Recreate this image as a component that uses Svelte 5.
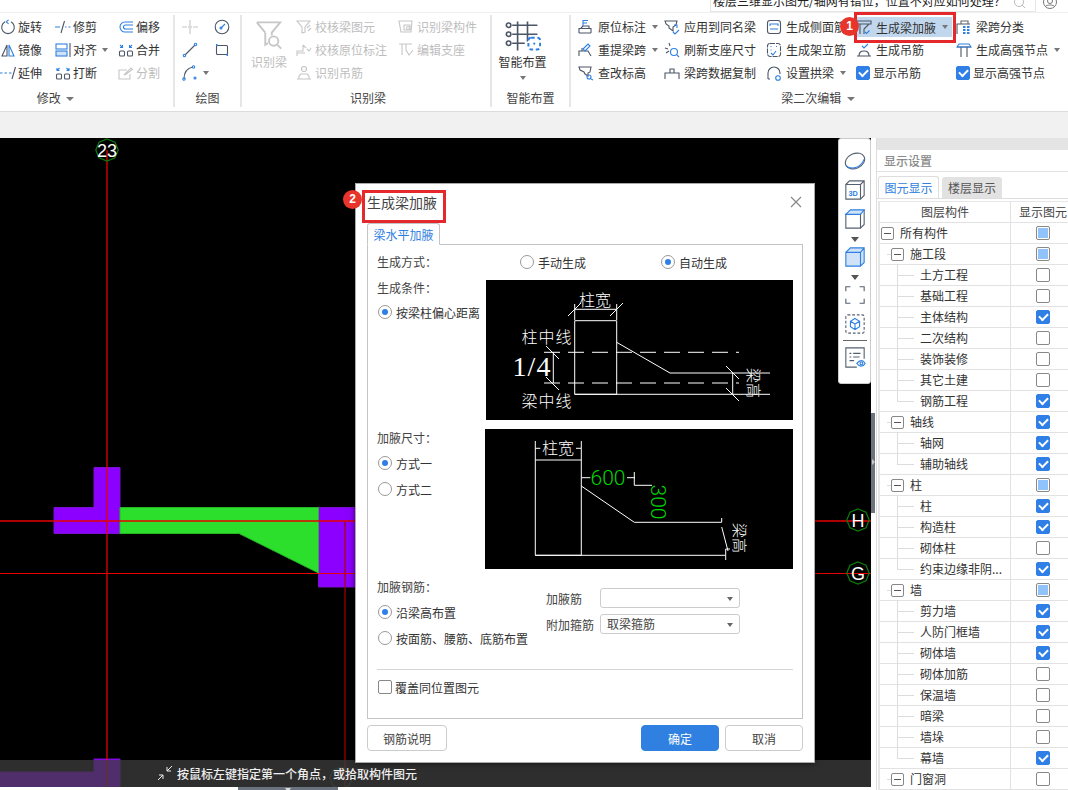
<script>
  const B = '#2f80e0';
  const icons = {
    rotate: `<path d="M5 2.800a6.300 6.300 0 1 0 6 0"/><path stroke="${B}" d="M8.600 .8 6.200 2.800 8.600 4.800"/>`,
    trim: `<path d="M9.500 2 6 14"/><path stroke="${B}" d="M0 8h5M10 8h1.500M13.500 8h2"/>`,
    offset: `<path stroke="${B}" d="M15 3H7a5 5 0 0 0 0 10h8M15 6H7.500a2 2 0 0 0 0 4H15"/>`,
    mirror: `<path d="M7 3 2 14h5z"/><path stroke="${B}" d="M9 3l5 11H9z"/>`,
    align: `<path d="M15 1v14"/><rect stroke="${B}" x="1" y="2" width="11" height="5"/><rect stroke="${B}" fill="#cfe2f8" x="1" y="9" width="11" height="5"/>`,
    merge: `<rect x="1.500" y="9" width="5" height="5" rx="1"/><rect x="9.500" y="9" width="5" height="5" rx="1"/><path stroke="${B}" d="M2 3l2.500 2.500M4.500 3v2.500H2M14 3l-2.500 2.500M11.500 3v2.500H14"/>`,
    extend: `<path stroke="${B}" d="M0 8h2.500M4.500 8h2.500M9 8h2.500"/><path d="M15.500 2 12 14"/>`,
    break: `<rect x="1.500" y="9" width="5" height="5" rx="1"/><rect x="9.500" y="9" width="5" height="5" rx="1"/><path stroke="${B}" d="M4.500 3 2 5.500M2 3v2.500h2.500M11.500 3 14 5.500M14 3v2.500h-2.500"/>`,
    split: `<path d="M12 9v5H1V5h8"/><path d="M6 10l7-7 1.500 1.500-7 5z"/>`,
    point: `<path d="M0 8h5M11 8h5M8 1v5M8 10v5"/><circle cx="8" cy="8" r="1.200"/>`,
    gauge: `<circle cx="8" cy="8" r="6.800"/><path stroke="${B}" d="M7 9l4-4"/><circle stroke="${B}" cx="7" cy="9" r="1"/>`,
    line: `<path d="M3 13 13 3"/><circle stroke="${B}" cx="2.500" cy="13.500" r="1.200"/><circle stroke="${B}" cx="13.500" cy="2.500" r="1.200"/>`,
    rect: `<rect x="2.500" y="3.500" width="11" height="9" rx="1"/><path stroke="${B}" stroke-width="2" d="M2 3h1.500M12.500 13H14"/>`,
    arc: `<path d="M2 14C2 7 6 3 11 2"/><circle stroke="${B}" cx="2" cy="14" r="1.200"/><circle stroke="${B}" cx="11.500" cy="2" r="1.200"/><circle stroke="${B}" cx="13" cy="13" r="1"/>`,
    chkbeam: `<path d="M1 2h13L9 8v5l-3 1V8zM11 9l3-3M12 12l3-3"/>`,
    chkorig: `<path d="M1 14V9h6V3M1 11h8M11 7l2 2 2-3M7 3l3 3"/>`,
    hang: `<circle cx="8" cy="4" r="2.500"/><path d="M3 14v-3l2-2h6l2 2v3M1 14h14"/>`,
    reccomp: `<path d="M1 2h13l-1 11H3zM6 6h6v5H6z"/><circle cx="10" cy="9" r="1.500"/>`,
    support: `<path d="M1 2h13M4 2v11M8 2v6l3 5 4-5"/>`,
    origin: `<path d="M1 14V9.500h12V14M1 14h12M3 9l2-2h6v2"/><path stroke="${B}" d="M5 7V1.500h5M5 4h4"/>`,
    apply: `<path d="M1 2h12l-1 4-3 2v4L5 9V7L2 5z"/><path stroke="${B}" d="M9 13l2 2 4-4M10 6h3v3"/>`,
    side: `<rect x="1.500" y="1.500" width="13" height="13" rx="2.500"/><path stroke="${B}" d="M4 7V5h8v2M4 10h8"/>`,
    span: `<path d="M1 15V5h13M1 5h13"/><path d="M5 5V2h7v3" stroke="#666"/><path stroke="${B}" stroke-width="1.800" d="M7 8h2.500M11 8h2.500M7 11h2.500M11 11h2.500M7 14h2.500M11 14h2.500"/>`,
    lift: `<path d="M1 14V9h9l3 5M4 9V6"/><path stroke="${B}" d="M5 7l5-5 2 2-5 5z"/>`,
    refresh: `<path d="M5 1l1 3M1 6l3 1M2 11l3-2"/><circle stroke="${B}" cx="10" cy="10" r="3.500"/><path stroke="${B}" d="M13 13l2 2"/>`,
    stand: `<rect x="1.500" y="1.500" width="13" height="13" rx="2.500" stroke-dasharray="5 1"/><path stroke="${B}" d="M4.500 4.500h1M10 4.500h1M4.500 8h1M5 11l2 2 3-4"/>`,
    hanggen: `<path d="M1 14h14M3 14c0-4 2-5 5-5s5 1 5 5"/><path stroke="${B}" d="M6 4l2 2 4-4"/>`,
    hsnode: `<path d="M1 5h14M5 5v10M11 5v10"/><path stroke="${B}" d="M3 2h10l2 3H1z"/>`,
    elev: `<path d="M1 2h12l-1 5-2 1v3L7 9 6 7 2 5z"/><circle stroke="${B}" cx="11" cy="12" r="2"/><path stroke="${B}" d="M13 14l2 1"/>`,
    spandata: `<path d="M1 14V8h14v6M1 8h14M6 8V4h4v4"/>`,
    arch: `<path d="M2 14V8a6 6 0 0 1 12 0v1M2 14h2"/><circle stroke="${B}" cx="12" cy="13" r="2.300"/>`,
    addon: `<path d="M1 2h14v3H1zM4 5v10M13 5 8 10v5"/><path stroke="${B}" d="M9 13l1.500 1.500 3-3"/>`
  };

  const modify = [
    { i: 'rotate', t: '旋转' }, { i: 'trim', t: '修剪' }, { i: 'offset', t: '偏移' },
    { i: 'mirror', t: '镜像' }, { i: 'align', t: '对齐', c: 1 }, { i: 'merge', t: '合并' },
    { i: 'extend', t: '延伸' }, { i: 'break', t: '打断' }, { i: 'split', t: '分割', d: 1 }
  ];
  const draw = ['point', 'gauge', 'line', 'rect', 'arc'];
  const recog = [
    { i: 'chkbeam', t: '校核梁图元', d: 1 }, { i: 'reccomp', t: '识别梁构件', d: 1 },
    { i: 'chkorig', t: '校核原位标注', d: 1 }, { i: 'support', t: '编辑支座', d: 1 },
    { i: 'hang', t: '识别吊筋', d: 1 }
  ];
  const edit = [
    { i: 'origin', t: '原位标注', c: 1 }, { i: 'apply', t: '应用到同名梁' }, { i: 'side', t: '生成侧面筋' },
    { i: 'addon', t: '生成梁加腋', c: 1, hl: 1 }, { i: 'span', t: '梁跨分类' },
    { i: 'lift', t: '重提梁跨', c: 1 }, { i: 'refresh', t: '刷新支座尺寸' }, { i: 'stand', t: '生成架立筋' },
    { i: 'hanggen', t: '生成吊筋' }, { i: 'hsnode', t: '生成高强节点', c: 1 },
    { i: 'elev', t: '查改标高' }, { i: 'spandata', t: '梁跨数据复制' }, { i: 'arch', t: '设置拱梁', c: 1 },
    { k: 1, t: '显示吊筋' }, { k: 1, t: '显示高强节点' }
  ];

  // level, name, state
  const rows = [
    [0, '所有构件', 'half'], [1, '施工段', 'half'], [2, '土方工程', 'off'], [2, '基础工程', 'off'],
    [2, '主体结构', 'on'], [2, '二次结构', 'off'], [2, '装饰装修', 'off'], [2, '其它土建', 'off'],
    [2, '钢筋工程', 'on'], [1, '轴线', 'on'], [2, '轴网', 'on'], [2, '辅助轴线', 'on'],
    [1, '柱', 'half'], [2, '柱', 'on'], [2, '构造柱', 'on'], [2, '砌体柱', 'off'],
    [2, '约束边缘非阴...', 'on'], [1, '墙', 'half'], [2, '剪力墙', 'on'], [2, '人防门框墙', 'on'],
    [2, '砌体墙', 'on'], [2, '砌体加筋', 'off'], [2, '保温墙', 'off'], [2, '暗梁', 'off'],
    [2, '墙垛', 'off'], [2, '幕墙', 'on'], [1, '门窗洞', 'off']
  ];
  const isLast = (idx) => rows[idx][0] === 2 && (!rows[idx + 1] || rows[idx + 1][0] < 2);
</script>

{#snippet tool(it)}
  <div class="item" class:off={it.d} class:hl={it.hl} class:chk={it.k}>
    {#if it.k}
      <span class="check on"></span>
    {:else}
      <svg class="ic" viewBox="0 0 16 16">{@html icons[it.i]}</svg>
    {/if}
    <span>{it.t}</span>
    {#if it.c}<i class="caret"></i>{/if}
  </div>
{/snippet}

<div class="page">
  <header class="ribbon">
    <div class="topbar">
      <div class="search">
        <span class="q">楼层三维显示图元/轴网有错位，位置不对应如何处理？</span>
        <svg class="q-ic" viewBox="0 0 12 12"><circle cx="5" cy="2" r="4.500" /><path d="M8 5l3 3" /></svg>
      </div>
      <svg class="user" viewBox="0 0 14 14"><circle cx="7" cy="2" r="6.500" /><circle cx="7" cy="1" r="2.500" /><path d="M2.500 6.500c1-2 8-2 9 0" /></svg>
    </div>

    <div class="groups">
      <section class="group g-mod">
        <div class="tools">
          {#each modify as it}{@render tool(it)}{/each}
        </div>
        <div class="glabel">修改 <i class="caret big"></i></div>
      </section>

      <section class="group g-draw">
        <div class="tools">
          {#each draw as name, n}
            <div class="item">
              <svg class="ic" class:off={n === 0} viewBox="0 0 16 16">{@html icons[name]}</svg>
              {#if n === 4}<i class="caret"></i>{/if}
            </div>
          {/each}
        </div>
        <div class="glabel">绘图</div>
      </section>

      <section class="group g-rec">
        <div class="rec-body">
          <div class="bigbtn off">
            <svg class="big-funnel" viewBox="0 0 30 32">
              <path d="M2 2h25L18 13v3M11 13 2 2M11 13v13l3-2" />
              <circle cx="20" cy="22" r="5" /><path d="M24 26l4 4" />
            </svg>
            <span>识别梁</span>
          </div>
          <div class="tools">
            {#each recog as it}{@render tool(it)}{/each}
          </div>
        </div>
        <div class="glabel">识别梁</div>
      </section>

      <section class="group g-smart">
        <div class="bigbtn">
          <svg class="big-grid" viewBox="0 0 40 32">
            <path d="M8 4h28M8 14h28M8 24h14M14 0v32M25 0v22" />
            <circle cx="4" cy="4" r="2.500" /><circle cx="4" cy="14" r="2.500" /><circle cx="4" cy="24" r="2.500" />
            <rect x="26" y="18" width="13" height="13" rx="3" stroke="#2f80e0" stroke-width="2.200" stroke-dasharray="4 3" fill="#fff" />
            <circle cx="32.500" cy="24.500" r="1.200" fill="#2f80e0" stroke="none" />
          </svg>
          <span>智能布置</span>
          <i class="caret"></i>
        </div>
        <div class="glabel">智能布置</div>
      </section>

      <section class="group g-edit">
        <div class="tools">
          {#each edit as it}{@render tool(it)}{/each}
        </div>
        <div class="glabel">梁二次编辑 <i class="caret big"></i></div>
      </section>
    </div>

    <div class="redbox one"></div>
    <b class="badge b1">1</b>
  </header>

  <div class="band"></div>

  <main class="work">
    <div class="left">
      <div class="canvas">
        <svg class="cad-view" viewBox="0 138 871 649">
          <path fill="#8b00ff" stroke="#7a10d0" d="M94 467.500h26V533.500H54V507.500h40zM318.500 507.500H360V587H318.500zM94 759h26v30H0V772h94z" />
          <path fill="#2ddf2d" stroke="#25b525" d="M120 507.500H318.500V573L239 533.500H120z" />
          <path stroke="#e60000" stroke-width="1.300" fill="none" d="M107 150V790M0 521H871" />
          <path stroke="#e60000" stroke-width="1" fill="none" d="M0 573.500H871" />
          <path stroke="#a80000" stroke-width="1.200" fill="none" d="M345 521V790" />
          <g class="marker">
            <path d="M107 139l8 3.200 3.200 7.800-3.200 7.800-8 3.200-8-3.200-3.200-7.800 3.200-7.800z" />
            <path d="M858 509l8 3.200 3.200 7.800-3.200 7.800-8 3.200-8-3.200-3.200-7.800 3.200-7.800z" />
            <path d="M858 562l8 3.200 3.200 7.800-3.200 7.800-8 3.200-8-3.200-3.200-7.800 3.200-7.800z" />
            <path class="dim" d="M341 767l8 3.200 3.200 7.800-3.200 7.800-8 3.200-8-3.200-3.200-7.800 3.200-7.800z" />
          </g>
          <text class="mk" x="107" y="156.500">23</text>
          <text class="mk" x="858" y="527">H</text>
          <text class="mk" x="858" y="580">G</text>
        </svg>

        <div class="status">
          <svg class="st-ic" viewBox="0 0 16 16"><path d="M1 15l5-5M2 10h4v4M15 1l-5 5M14 6h-4V2" /></svg>
          <span>按鼠标左键指定第一个角点，或拾取构件图元</span>
        </div>

        <nav class="viewbar">
          <svg viewBox="0 0 24 24" class="vb"><ellipse transform="rotate(-25 12 12)" cx="12" cy="12" rx="11" ry="8" /><path stroke="#2f80e0" d="M2 17c6 5 16 3 20-7" /></svg>
          <svg viewBox="0 0 24 24" class="vb"><path d="M2 6h16v16H2zM2 6l4-4h16v16l-4 4M18 6l4-4" /><text x="10" y="18" class="t3d">3D</text></svg>
          <svg viewBox="0 0 24 24" class="vb"><path d="M2 7v15h16V7zM18 22l4-4V2" /><path stroke="#2f80e0" fill="#cfe2f8" d="M2 7l5-5h15l-4 5z" /></svg>
          <i class="caret vc"></i>
          <svg viewBox="0 0 24 24" class="vb"><path fill="#cfe2f8" stroke="#2f80e0" d="M2 7h16v15H2zM2 7l5-5h15v16l-4 4M18 7l4-5" /></svg>
          <i class="caret vc"></i>
          <svg viewBox="0 0 24 24" class="vb"><path d="M2 8V3h5M17 3h5v5M22 16v5h-5M7 21H2v-5" /></svg>
          <svg viewBox="0 0 24 24" class="vb"><rect x="2" y="2" width="20" height="20" rx="2" stroke-dasharray="3 2" /><path stroke="#2f80e0" d="M12 6l5 3v6l-5 3-5-3V9zM7 9l5 3 5-3M12 12v6" /></svg>
          <div class="vsep"></div>
          <svg viewBox="0 0 24 24" class="vb"><path d="M22 14V2H2v21h12" /><path d="M6 8h2M10 8h8M6 12h2M10 12h7M6 16h5" /><circle stroke="#2f80e0" cx="19" cy="19" r="1.500" /><path stroke="#2f80e0" d="M14 19c3-4 7-4 9 0-2 4-6 4-9 0z" /></svg>
        </nav>
      </div>
      <div class="hscroll"><span class="htab"><i class="caret white"></i></span></div>
    </div>

    <div class="split"><span class="grip"><i></i></span></div>

    <aside class="panel">
      <div class="p-strip"></div>
      <div class="p-title">显示设置</div>
      <div class="p-tabs">
        <span class="p-tab active">图元显示</span>
        <span class="p-tab">楼层显示</span>
      </div>
      <div class="tree">
        <div class="row head">
          <span class="c1 center">图层构件</span>
          <span class="c2">显示图元</span>
        </div>
        {#each rows as [lv, name, st], idx}
          <div class="row">
            <span class="c1 lv{lv}">
              {#if lv === 2}
                <i class="vline" class:last={isLast(idx)}></i><i class="hline"></i>
              {:else}
                {#if lv === 1}<i class="hstub"></i>{/if}
                <i class="fold"></i>
              {/if}
              <span class="nm">{name}</span>
            </span>
            <span class="c2"><span class="check {st}"></span></span>
          </div>
        {/each}
      </div>
    </aside>

    <div class="dialog">
      <div class="d-title">
        <span>生成梁加腋</span>
        <svg class="close" viewBox="0 0 12 12"><path d="M1 1l10 10M11 1 1 11" /></svg>
      </div>
      <div class="d-tab">梁水平加腋</div>
      <div class="d-body">
        <div class="line-mode">
          <span class="lab">生成方式：</span>
          <label class="radio r-a"><i class="dot"></i>手动生成</label>
          <label class="radio r-b"><i class="dot sel"></i>自动生成</label>
        </div>

        <div class="sec s-1">
          <div class="side">
            <span class="lab">生成条件：</span>
            <label class="radio"><i class="dot sel"></i>按梁柱偏心距离</label>
          </div>
          <svg class="pic" viewBox="0 0 307 140">
            <g class="w">
              <path d="M88.700 40.700H130.700V114.300H88.700zM88.700 29.300H130.700M88.700 24V40M130.700 24V40M82 36l13-13M124 36l13-13" />
              <path d="M130.700 62.300 184 93H284M88.700 114.300H284M246.700 93V114.300M240 86l13 13M240 108l13 13M67.300 72.300V103M60 66l13 13M60 97l13 13" />
              <path stroke-dasharray="16 8" d="M58 72.300H253M58 103H253" />
            </g>
            <text class="cjk" x="109" y="26">柱宽</text>
            <text class="cjk sp" x="61" y="63">柱中线</text>
            <text class="cjk sp" x="61" y="127">梁中线</text>
            <text class="frac" x="46" y="96">1/4</text>
            <text class="cjk small" transform="translate(267 103) rotate(90)" x="0" y="5">梁高</text>
          </svg>
        </div>

        <div class="sec s-2">
          <div class="side">
            <span class="lab">加腋尺寸：</span>
            <label class="radio"><i class="dot sel"></i>方式一</label>
            <label class="radio"><i class="dot"></i>方式二</label>
          </div>
          <svg class="pic" viewBox="0 0 308 140">
            <g class="w">
              <path d="M50.300 31H96.300V126.300H50.300zM50.300 12V31M96.300 12V31M50.300 19.300h5M91 19.300h5M96.300 48.700h9M142 48.700h8M149.300 43V56.300H167" />
              <path d="M96.300 57 149.300 93.300H236.700V89M236.700 98 243 122M240.700 126.300V120H245M50.300 126.300H240.700V131" />
            </g>
            <text class="cjk" x="73" y="25">柱宽</text>
            <text class="gr" x="123" y="56">600</text>
            <text class="gr" transform="translate(173 73) rotate(90)" x="0" y="7">300</text>
            <text class="cjk small" transform="translate(254 109) rotate(90)" x="0" y="5">梁高</text>
          </svg>
        </div>

        <div class="sec s-3">
          <div class="side">
            <span class="lab">加腋钢筋：</span>
            <label class="radio"><i class="dot sel"></i>沿梁高布置</label>
            <label class="radio"><i class="dot"></i>按面筋、腰筋、底筋布置</label>
          </div>
          <div class="fields">
            <span class="f-lab">加腋筋</span>
            <div class="select"><i class="caret"></i></div>
            <span class="f-lab">附加箍筋</span>
            <div class="select">取梁箍筋<i class="caret"></i></div>
          </div>
        </div>

        <div class="rule"></div>
        <label class="cover"><span class="check off"></span>覆盖同位置图元</label>
      </div>
      <div class="d-foot">
        <button class="btn wide">钢筋说明</button>
        <span class="grow"></span>
        <button class="btn primary">确定</button>
        <button class="btn">取消</button>
      </div>
      <div class="redbox two"></div>
      <b class="badge b2">2</b>
    </div>
  </main>
</div>

<style>
  :global(body) { margin: 0; background: #fff; }

  .page {
    width: 1068px;
    height: 790px;
    overflow: hidden;
    position: relative;
    font-family: "Noto Sans CJK SC", "Liberation Sans", sans-serif;
    font-size: 12px;
    color: #333;
    background: #fff;
  }

  /* ribbon */
  .ribbon { position: relative; height: 111px; border-bottom: 1px solid #dcdcdc; background: #fff; box-sizing: content-box; }
  .topbar { height: 12px; border-bottom: 1px solid #f0f0f0; position: relative; overflow: hidden; }
  .search {
    position: absolute; left: 710px; top: -1px; width: 324px; height: 11px;
    border: 1px solid #e6e6e6; overflow: hidden; background: #fff;
  }
  .q { position: absolute; left: 2px; top: -7px; line-height: 16px; white-space: nowrap; color: #222; }
  .q-ic { position: absolute; left: 303px; top: 0; width: 12px; height: 12px; fill: none; stroke: #bbb; }
  .user { position: absolute; left: 1043px; top: 0; width: 14px; height: 14px; fill: none; stroke: #777; }

  .groups { display: flex; height: 92px; margin-top: 2px; }
  .group { position: relative; height: 92px; display: flex; flex-direction: column; border-right: 2px solid #e6e6e6; box-sizing: border-box; flex: none; }
  .glabel { margin-top: auto; height: 23px; line-height: 28px; text-align: center; color: #444; white-space: nowrap; }

  .tools { display: grid; grid-auto-rows: 23px; align-content: start; }
  .item { display: flex; align-items: center; gap: 2px; white-space: nowrap; height: 23px; }
  .item.off { color: #bdbdbd; }
  .ic { width: 16px; height: 16px; flex: none; fill: none; stroke: #4c5666; stroke-width: 1.100; }
  .item.off .ic, .ic.off { stroke: #c6c6c6; }
  .item.off .ic :global(*) { stroke: #c6c6c6; }
  .ic.off :global(*) { stroke: #c6c6c6; }

  .caret { display: inline-block; width: 0; height: 0; border: 3px solid transparent; border-top: 4px solid #777; border-bottom: 0; margin-left: 3px; flex: none; }
  .caret.big { border-width: 4px; border-top-width: 4px; border-bottom: 0; margin-left: 3px; vertical-align: 2px; }
  .caret.white { border-top-color: #ddd; margin: 0; }

  .g-mod { width: 175px; }
  .g-mod .tools { grid-template-columns: 55px 63px 1fr; }
  .g-mod .glabel { padding-right: 62px; }
  .g-draw { width: 67px; padding-left: 7px; }
  .g-draw .tools { grid-template-columns: 32px 1fr; }
  .g-draw .glabel { margin-left: -7px; }
  .g-rec { width: 250px; }
  .rec-body { display: flex; }
  .g-rec .glabel { padding-left: 4px; }
  .g-rec .bigbtn { width: 54px; padding-top: 5px; flex: none; }
  .g-rec .tools { grid-template-columns: 102px 1fr; }
  .g-rec .item { gap: 3px; }
  .bigbtn { display: flex; flex-direction: column; align-items: center; color: #333; }
  .bigbtn.off { color: #bdbdbd; }
  .big-funnel { width: 28px; height: 31px; fill: none; stroke: #c6c6c6; stroke-width: 2; }
  .big-grid { width: 36px; height: 30px; fill: none; stroke: #4c5666; stroke-width: 1.800; margin-top: 6px; }
  .bigbtn span { line-height: 18px; margin-top: 2px; }
  .g-smart { width: 79px; }
  .g-smart .bigbtn { margin-right: 16px; }
  .g-smart .bigbtn .caret { margin: 5px 0 0; }
  .g-edit { flex: 1; border-right: 0; padding-left: 7px; }
  .g-edit .tools { grid-template-columns: 86px 102px 90px 100px 1fr; }
  .g-edit .item { gap: 4px; }
  .g-edit .item.chk { gap: 3px; }
  .g-edit .glabel { padding-right: 10px; }
  .g-edit .caret { margin-left: 2px; }
  .g-edit .caret.big { margin-left: 3px; }
  .item.hl { background: #c1d7ee; height: 20px; margin-top: 2px; margin-right: 4px; }

  .redbox { position: absolute; border: 3px solid #e5282c; box-sizing: border-box; pointer-events: none; }
  .redbox.one { left: 854px; top: 12px; width: 102px; height: 31px; }
  .redbox.two { left: 6px; top: 6px; width: 84px; height: 33px; }
  .badge {
    position: absolute; width: 19px; height: 19px; border-radius: 50%; background: #e8352c; color: #fff;
    font: bold 12px/19px "Liberation Sans", sans-serif; text-align: center;
  }
  .b1 { left: 840px; top: 17px; }
  .b2 { left: -13px; top: 6px; }

  .band { height: 26px; background: #f1f1f1; }

  /* workspace */
  .work { position: relative; display: flex; height: 652px; }
  .left { width: 871px; flex: none; }
  .canvas { position: relative; height: 649px; background: #000; overflow: hidden; }
  .cad-view { display: block; width: 871px; height: 649px; }
  .marker path { fill: none; stroke: #0c7d0c; stroke-width: 1.200; }
  .marker .dim { stroke: #1e4a1e; }
  .mk { fill: #fff; font: 18px "Liberation Sans", sans-serif; text-anchor: middle; }
  .hscroll { height: 3px; background: #fff; }
  .htab { display: block; margin-left: 238px; width: 100px; height: 3px; background: #6b7280; text-align: center; line-height: 0; }

  .status {
    position: absolute; left: 0; right: 0; bottom: 0; height: 27px; display: flex; align-items: center;
    background: rgba(60, 60, 60, 0.76); color: #eee; padding: 0 0 1px 157px; gap: 4px; font-weight: 500; box-sizing: border-box;
  }
  .st-ic { width: 16px; height: 16px; fill: none; stroke: #eee; }

  .viewbar {
    position: absolute; left: 838px; top: 0; width: 33px; height: 246px; box-sizing: border-box;
    background: #fff; border: 1px solid #ccc; border-radius: 3px; display: flex; flex-direction: column; align-items: center; padding-top: 11px;
  }
  .vb { width: 22px; height: 22px; fill: none; stroke: #55606f; stroke-width: 1.200; flex: none; margin-bottom: 7px; }
  .t3d { font: bold 8px "Liberation Sans", sans-serif; fill: #2f80e0; stroke: none; text-anchor: middle; }
  .caret.vc { margin: 0 0 4px; border-width: 4px; border-top-width: 5px; border-top-color: #555; border-bottom: 0; }
  .vsep { width: 24px; height: 1px; background: #666; margin: -2px 0 5px; flex: none; }

  .split { width: 5px; flex: none; background: #fff; position: relative; }
  .grip { position: absolute; left: 0; top: 275px; width: 4px; height: 100px; background: #6c757d; }
  .grip i { position: absolute; left: 1px; top: 46px; border: 3px solid transparent; border-left-color: #ccc; border-right: 0; }

  /* panel */
  .panel { flex: 1; border-left: 1px solid #ddd; background: #fff; min-width: 0; }
  .p-strip { height: 12px; background: #e4e4e4; }
  .p-title { height: 21px; line-height: 22px; padding-left: 7px; color: #8a8a8a; font-weight: 500; border-bottom: 1px solid #e2e2e2; }
  .p-tabs { display: flex; gap: 3px; padding: 4px 0 0 1px; height: 22px; border-bottom: 1px solid #ddd; box-sizing: content-box; align-items: flex-end; }
  .p-tab { height: 21px; line-height: 21px; width: 60px; text-align: center; background: #e2e2e2; color: #555; border-radius: 3px 3px 0 0; }
  .p-tab.active { height: 22px; width: 61px; box-sizing: border-box; background: #fff; color: #2f80e0; border: 1px solid #ddd; border-bottom: 0; }

  .tree { margin: 2px 0 0 1px; border-left: 2px solid #e6e6e6; border-top: 1px solid #e6e6e6; }
  .row { display: flex; height: 21px; box-sizing: border-box; border-bottom: 1px solid #e2e2e2; white-space: nowrap; }
  .c1 { width: 130px; flex: none; position: relative; border-right: 1px solid #e2e2e2; line-height: 20px; display: block; }
  .c2 { flex: 1; display: flex; align-items: center; justify-content: center; padding-left: 6px; }
  .center { text-align: center; }
  .head .c2 { color: #444; padding: 0 0 0 8px; overflow: hidden; justify-content: flex-start; line-height: 20px; }
  .head .c1 { color: #444; }
  .nm { position: absolute; top: 0; }
  .lv0 .nm { left: 20px; }
  .lv1 .nm { left: 30px; }
  .lv2 .nm { left: 40px; }
  .fold { position: absolute; top: 4px; width: 11px; height: 11px; border: 1px solid #888; border-radius: 2px; background: #fff; }
  .fold::after { content: ""; position: absolute; left: 2px; right: 2px; top: 5px; height: 1px; background: #555; }
  .lv0 .fold { left: 1px; }
  .lv1 .fold { left: 11px; }
  .hstub { position: absolute; left: 7px; top: 10px; width: 5px; height: 1px; background: #ddd; }
  .vline { position: absolute; left: 17px; top: -1px; bottom: -1px; width: 1px; background: #ddd; }
  .vline.last { bottom: 10px; }
  .hline { position: absolute; left: 17px; top: 10px; width: 17px; height: 1px; background: #ddd; }

  .check { display: inline-block; width: 14px; height: 14px; box-sizing: border-box; border-radius: 2px; border: 1px solid #888; background: #fff; position: relative; flex: none; }
  .check.on { background: #2f7fe6; border-color: #2f7fe6; }
  .check.on::after {
    content: ""; position: absolute; left: 2px; top: 2px; width: 7px; height: 4px;
    border-left: 2px solid #fff; border-bottom: 2px solid #fff; transform: rotate(-45deg);
  }
  .check.half::after { content: ""; position: absolute; inset: 1px; background: #90c2fc; }

  /* dialog */
  .dialog {
    position: absolute; left: 355px; top: 45px; width: 460px; height: 580px; box-sizing: border-box;
    background: #fff; border: 1px solid #aaa; box-shadow: 0 0 6px rgba(0, 0, 0, 0.6); padding: 0 11px;
    display: flex; flex-direction: column;
  }
  .d-title { height: 39px; box-sizing: border-box; padding-bottom: 3px; font-size: 14px; color: #444; display: flex; justify-content: space-between; align-items: center; flex: none; }
  .close { width: 12px; height: 12px; fill: none; stroke: #888; stroke-width: 1.200; margin-right: 1px; }
  .d-tab {
    width: 73px; height: 22px; line-height: 22px; text-align: center; color: #2f80e0; box-sizing: border-box;
    border: 1px solid #c4c4c4; border-bottom: 1px solid #fff; border-radius: 3px 3px 0 0; margin-bottom: -1px; position: relative; flex: none;
  }
  .d-body { height: 475px; box-sizing: border-box; border: 1px solid #c4c4c4; padding: 0 9px; flex: none; }
  .line-mode { position: relative; height: 35px; box-sizing: border-box; padding-bottom: 1px; display: flex; align-items: center; }
  .lab { color: #444; display: block; line-height: 18px; }
  .r-a { position: absolute; left: 143px; }
  .r-b { position: absolute; left: 284px; }
  .radio { display: flex; align-items: center; gap: 4px; color: #333; white-space: nowrap; }
  .dot { width: 14px; height: 14px; box-sizing: border-box; border: 1px solid #999; border-radius: 50%; background: #fff; position: relative; flex: none; }
  .dot.sel::after { content: ""; position: absolute; left: 3px; top: 3px; width: 6px; height: 6px; border-radius: 50%; background: #2f7fe6; }

  .sec { display: grid; grid-template-columns: 109px 307px; }
  .s-2 { margin: 9px 0 0 -1px; grid-template-columns: 109px 308px; }
  .s-2 .side { padding-left: 1px; }
  .s-3 { margin-top: 9px; height: 91px; grid-template-columns: 169px 1fr; }
  .side { display: flex; flex-direction: column; }
  .s-1 .side { margin-top: -1px; }
  .s-1 .lab { margin-bottom: 6px; }
  .s-1 .radio { margin-left: 1px; height: 18px; }
  .s-2 .lab { margin-bottom: 7px; }
  .s-2 .radio { margin-left: 1px; height: 18px; margin-bottom: 8px; }
  .s-3 .lab { margin-bottom: 7px; }
  .s-3 .radio { margin-left: 1px; height: 18px; margin-bottom: 8px; }

  .pic { width: 100%; height: 140px; background: #000; display: block; }
  .w path { fill: none; stroke: #fff; stroke-width: 1; }
  .cjk { fill: #fff; font-size: 16px; font-weight: 300; text-anchor: middle; }
  .cjk.sp { letter-spacing: 1px; }
  .cjk.small { font-size: 15px; }
  .frac { fill: #fff; font: 28px "Liberation Serif", serif; text-anchor: middle; letter-spacing: 1px; }
  .gr { fill: #00d800; font: 300 21px Roboto, "Liberation Sans", sans-serif; text-anchor: middle; }

  .fields { display: grid; grid-template-columns: 54px 140px; grid-auto-rows: 20px; row-gap: 6px; align-items: center; margin-top: 10px; align-content: start; }
  .f-lab { color: #444; white-space: nowrap; }
  .select {
    height: 20px; line-height: 18px; box-sizing: border-box; border: 1px solid #ccc; border-radius: 3px; padding: 0 6px; color: #444; position: relative;
  }
  .select .caret { position: absolute; right: 6px; top: 8px; border-top-color: #666; margin: 0; }

  .rule { height: 1px; background: #d4d4d4; }
  .cover { display: flex; align-items: center; gap: 3px; margin: 8px 0 0 1px; height: 18px; color: #333; }

  .d-foot { display: flex; gap: 6px; margin-top: 6px; flex: none; }
  .grow { flex: 1; }
  .btn { height: 26px; width: 78px; font: inherit; color: #444; background: #fff; border: 1px solid #ccc; border-radius: 4px; padding: 0; }
  .btn.wide { width: 80px; }
  .btn.primary { background: #2f80e0; border-color: #2f80e0; color: #fff; }
</style>
